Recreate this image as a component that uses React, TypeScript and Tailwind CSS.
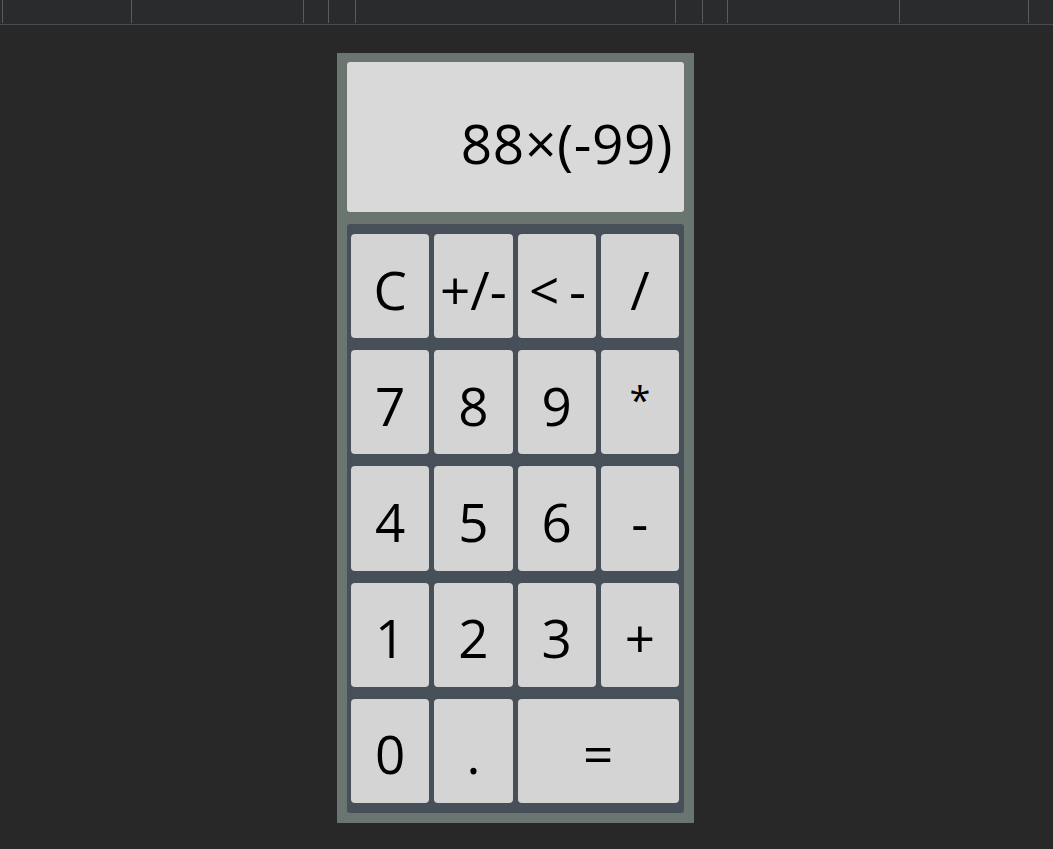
import React from "react";

const seps = [2, 131, 303, 328, 355, 675, 702, 727, 899, 1028];

function TopBar() {
  const items: React.ReactNode[] = [];
  let prev = 0;
  seps.forEach((x, i) => {
    items.push(<div key={"s" + i} style={{ width: x - prev }} className="shrink-0" />);
    items.push(<div key={"l" + i} className="w-px shrink-0 h-[23px] bg-[#5a5b5d]" />);
    prev = x + 1;
  });
  return (
    <div className="h-[25px] bg-[#2a2b2d] border-b border-[#4a4b4d] flex">{items}</div>
  );
}

const keys: { label: string; span?: boolean; cls?: string }[] = [
  { label: "C" }, { label: "+/-" }, { label: "< -", cls: "tracking-[-2px]" }, { label: "/" },
  { label: "7" }, { label: "8" }, { label: "9" }, { label: "*", cls: "text-[38px] -translate-y-[6px]" },
  { label: "4" }, { label: "5" }, { label: "6" }, { label: "-" },
  { label: "1" }, { label: "2" }, { label: "3" }, { label: "+" },
  { label: "0" }, { label: "." }, { label: "=", span: true },
];

export default function App() {
  return (
    <div
      className="min-h-[849px] w-full bg-[#282828] text-black"
      style={{ fontFamily: '"Open Sans", "Noto Sans", sans-serif' }}
    >
      <TopBar />
      <div className="pt-[28px] pl-[337px]">
        <div className="w-[357px] h-[770px] bg-[#6b7570] pt-[9px] px-[10px] pb-[10px] flex flex-col gap-[12px]">
          <div className="h-[150px] bg-[#d9d9d9] rounded-[3px] flex items-center justify-end pr-[11px] pt-[10px] text-[55px] tracking-[0.6px] font-normal leading-none">
            88×(-99)
          </div>
          <div className="flex-1 bg-[#474f58] rounded-[3px] pt-[10px] pb-[10px] pl-[4px] pr-[5px] grid grid-cols-4 grid-rows-5 gap-x-[5px] gap-y-[12px]">
            {keys.map((k, i) => (
              <div
                key={i}
                className={
                  "bg-[#d4d4d4] rounded-[4px] flex items-center justify-center text-[53px] font-normal leading-none " +
                  (k.span ? "col-span-2" : "")
                }
              >
                <span className={"pt-[6px] inline-block " + (k.cls ?? "")}>{k.label}</span>
              </div>
            ))}
          </div>
        </div>
      </div>
    </div>
  );
}
